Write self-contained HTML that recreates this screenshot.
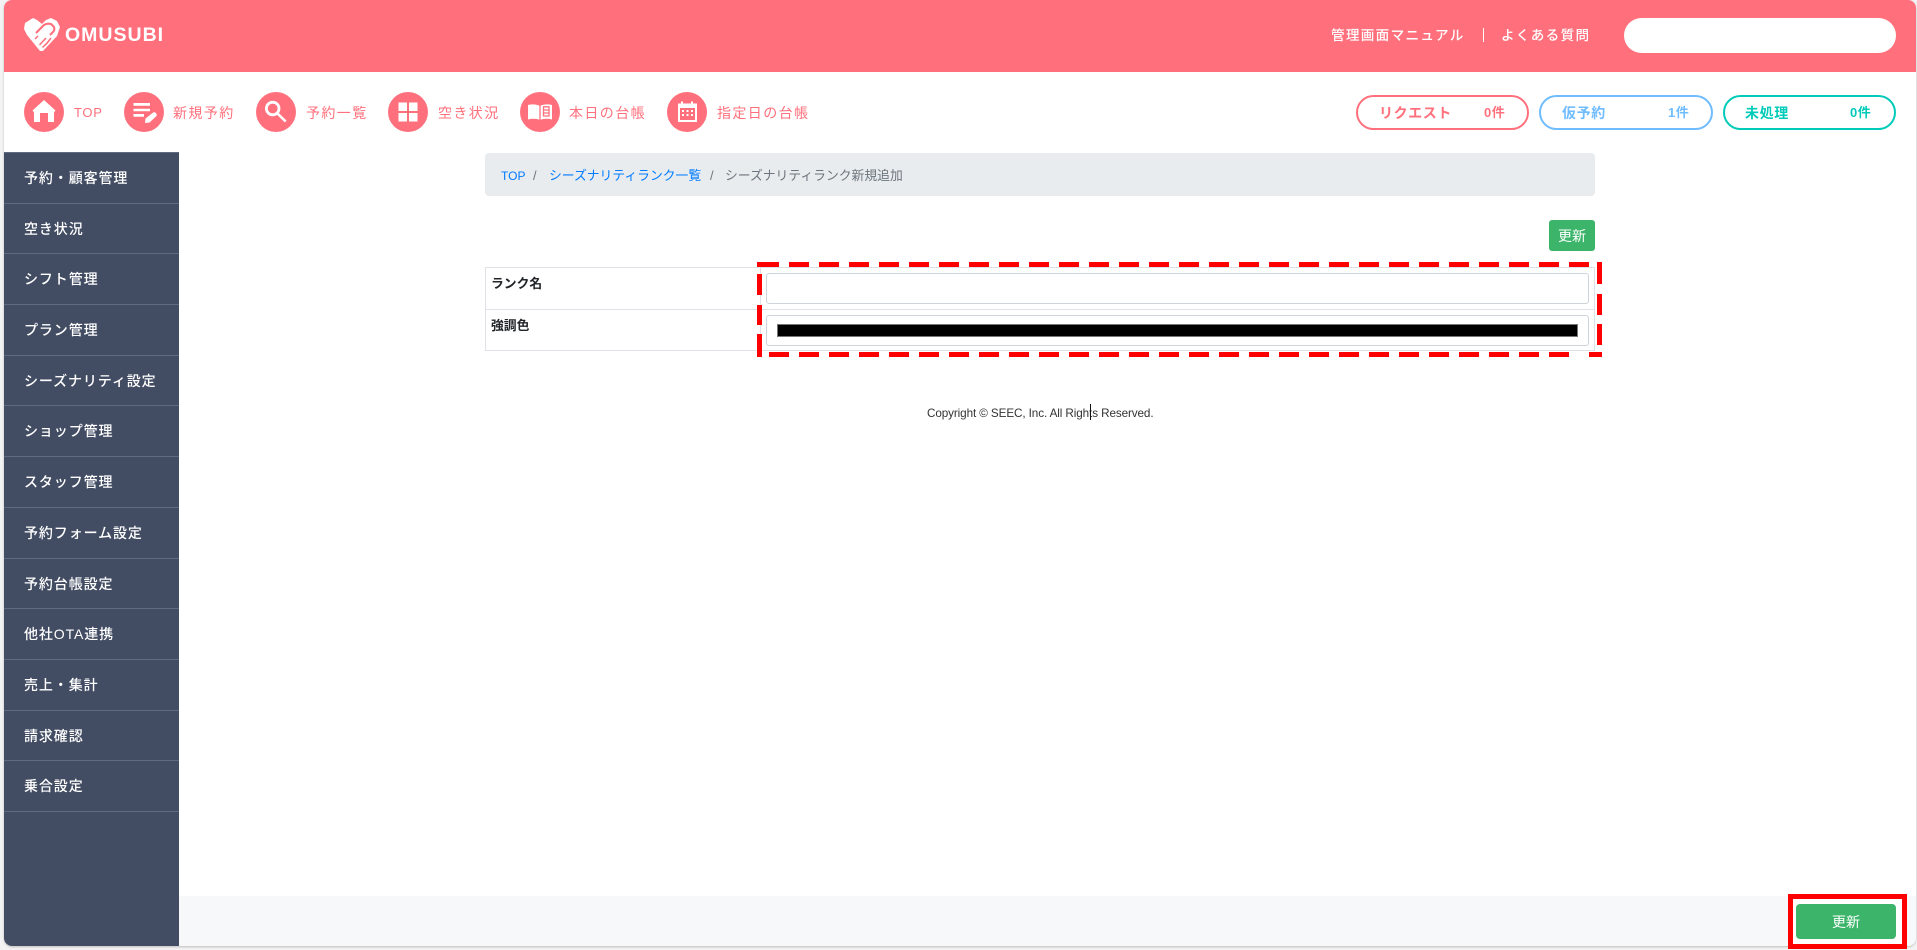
<!DOCTYPE html>
<html lang="ja"><head><meta charset="utf-8"><title>OMUSUBI</title>
<style>
*{box-sizing:border-box}
html,body{margin:0;padding:0;width:1917px;height:950px;overflow:hidden;background:#f3f3f3}
body{position:relative;font-family:"Liberation Sans","Noto Sans CJK JP",sans-serif;color:#212529}
#win{position:absolute;left:4px;top:0;width:1912px;height:946px;background:#fff;border-radius:8px;overflow:hidden;box-shadow:0 1px 2px rgba(0,0,0,.22)}
.a{position:absolute}
.t{position:absolute;white-space:nowrap;line-height:20px}
.hd{position:absolute;left:4px;top:0;width:1912px;height:72px;background:#ff707c;border-radius:8px 8px 0 0}
.ic{position:absolute;top:92px;width:40px;height:40px}
.nv{top:103px;font-size:14px;letter-spacing:1.4px;color:#ff707c}
.side{position:absolute;left:4px;top:152px;width:175px;height:794px;background:#424c63;border-top:1px solid #5f6980;border-radius:0 0 0 8px}
.side div{height:50.7px;border-bottom:1px solid #5f6980;color:#fff;font-size:14px;letter-spacing:.9px;line-height:51px;padding-left:20px;font-weight:500}
.pill{position:absolute;top:95px;height:35px;border:2px solid;border-radius:18px;background:#fff}
.pt{top:103px;font-size:14px;font-weight:700;letter-spacing:.6px}
.pn{top:103px;font-size:13px;font-weight:700;letter-spacing:.5px}
.bc{top:165.500px;font-size:12.8px}
</style></head><body>
<div id="win"></div>
<div class="hd"></div>

<svg class="a" style="left:24px;top:18px" width="36" height="33" viewBox="0 0 36 33"><path fill="#fff" d="M9 0 1 5 0 11 3 17 16 33H19L33 18 36 9 33 3 27 0 22 2 18 6 13 2Z"/><path fill="none" stroke="#ff707c" stroke-width="2.100" d="M12 15 20 7Q23 5 27 6L30 9Q31 12 29 14L26 17"/><path fill="none" stroke="#ff707c" stroke-width="1.500" d="M11 21 14 18M15.500 27 22 20M18.500 29.500 25 23M21.500 27 27 20"/></svg>
<div class="t" style="left:65px;top:25px;font-size:19.500px;font-weight:700;letter-spacing:1px;color:#fff">OMUSUBI</div>

<div class="t" style="left:1331px;top:26px;font-size:13.600px;letter-spacing:1.300px;color:#fff;font-weight:500">管理画面マニュアル</div>
<div class="a" style="left:1483px;top:28px;width:1px;height:14px;background:#fff"></div>
<div class="t" style="left:1501px;top:26px;font-size:13.600px;letter-spacing:1.300px;color:#fff;font-weight:500">よくある質問</div>
<div class="a" style="left:1624px;top:18px;width:272px;height:35px;background:#fff;border-radius:18px"></div>

<svg class="ic" style="left:24px" viewBox="0 0 40 40"><circle cx="20" cy="20" r="20" fill="#ff707c"/><path fill="#fff" d="M20 8 31.500 18.500 30 20.500V30H24V21H16V30H10V20.500L8.500 18.500Z"/></svg>
<div class="t nv" style="left:74px;font-size:13px;letter-spacing:.7px">TOP</div>
<svg class="ic" style="left:124px" viewBox="0 0 40 40"><circle cx="20" cy="20" r="20" fill="#ff707c"/><path fill="#fff" d="M9.500 11H26V13.700H9.500ZM9.500 16.700H26V19.300H9.500ZM9.500 22H20V24.700H9.500ZM21 31 21.500 26.500 28.500 21C29.800 20 31 20 32 21.200S33 23.500 32 24.500L25.500 30.500Z"/></svg>
<div class="t nv" style="left:173px">新規予約</div>
<svg class="ic" style="left:256px" viewBox="0 0 40 40"><circle cx="20" cy="20" r="20" fill="#ff707c"/><circle cx="16.700" cy="16.500" r="6.300" fill="none" stroke="#fff" stroke-width="2.800"/><path stroke="#fff" stroke-width="2.600" d="M21.500 21.500 29.700 29.500"/></svg>
<div class="t nv" style="left:306px">予約一覧</div>
<svg class="ic" style="left:388px" viewBox="0 0 40 40"><circle cx="20" cy="20" r="20" fill="#ff707c"/><path fill="#fff" d="M10.500 10.500H19V19H10.500ZM21 10.500H29.500V19H21ZM10.500 21H19V29.500H10.500ZM21 21H29.500V29.500H21Z"/></svg>
<div class="t nv" style="left:438px">空き状況</div>
<svg class="ic" style="left:520px" viewBox="0 0 40 40"><circle cx="20" cy="20" r="20" fill="#ff707c"/><path fill="#fff" d="M8 13C12 12 16 12 20 14V28C16 26.500 12 26.500 8 27.500ZM20 14C24 12 28 12 32 13V27.500C28 26.500 24 26.500 20 28Z"/><path stroke="#ff707c" stroke-width="1.300" fill="none" d="M20 14V28M23.500 14.800H29V24H23.500ZM23.500 18H29M23.500 21H29"/></svg>
<div class="t nv" style="left:569px">本日の台帳</div>
<svg class="ic" style="left:667px" viewBox="0 0 40 40"><circle cx="20" cy="20" r="20" fill="#ff707c"/><path fill="#fff" d="M11 11.500H14V9.500H16V11.500H24V9.500H26V11.500H30V30H11Z"/><rect x="13" y="16" width="15" height="12" fill="#ff707c"/><path fill="#fff" d="M15 18H17V20H15ZM19.500 18H21.500V20H19.500ZM24 18H26V20H24ZM15 22H17V24H15ZM19.500 22H21.500V24H19.500ZM24 22H26V24H24Z"/></svg>
<div class="t nv" style="left:717px">指定日の台帳</div>

<div class="pill" style="left:1356px;width:173px;border-color:#ff707c"></div>
<div class="t pt" style="left:1379px;color:#ff707c">リクエスト</div><div class="t pn" style="left:1484px;color:#ff707c">0件</div>
<div class="pill" style="left:1539px;width:174px;border-color:#6fbcff"></div>
<div class="t pt" style="left:1562px;color:#6fbcff">仮予約</div><div class="t pn" style="left:1668px;color:#6fbcff">1件</div>
<div class="pill" style="left:1723px;width:173px;border-color:#00cbb8"></div>
<div class="t pt" style="left:1745px;color:#00cbb8">未処理</div><div class="t pn" style="left:1850px;color:#00cbb8">0件</div>

<div class="side">
<div>予約・顧客管理</div><div>空き状況</div><div>シフト管理</div><div>プラン管理</div><div>シーズナリティ設定</div><div>ショップ管理</div><div>スタッフ管理</div><div>予約フォーム設定</div><div>予約台帳設定</div><div>他社OTA連携</div><div>売上・集計</div><div>請求確認</div><div>乗合設定</div>
</div>

<div class="a" style="left:485px;top:153px;width:1110px;height:43px;background:#e9ecef;border-radius:4px"></div>
<div class="t bc" style="left:501px;color:#007bff;font-size:12px">TOP</div>
<div class="t bc" style="left:533px;color:#6c757d">/</div>
<div class="t bc" style="left:549px;color:#007bff">シーズナリティランク一覧</div>
<div class="t bc" style="left:710px;color:#6c757d">/</div>
<div class="t bc" style="left:725px;color:#6c757d">シーズナリティランク新規追加</div>

<div class="a" style="left:1549px;top:220px;width:46px;height:31px;background:#3cb56a;border-radius:3px"></div>
<div class="t" style="left:1558px;top:226px;font-size:14px;color:#fff">更新</div>

<div class="a" style="left:485px;top:267px;width:1110px;height:84px;border:1px solid #dee2e6"></div>
<div class="a" style="left:485px;top:309px;width:1110px;height:1px;background:#dee2e6"></div>
<div class="a" style="left:760px;top:267px;width:1px;height:84px;background:#dee2e6"></div>
<div class="t" style="left:491px;top:274px;font-size:12.800px;font-weight:700">ランク名</div>
<div class="t" style="left:491px;top:316px;font-size:12.800px;font-weight:700">強調色</div>
<div class="a" style="left:766px;top:273px;width:823px;height:31px;border:1px solid #ced4da;border-radius:3px;background:#fff"></div>
<div class="a" style="left:766px;top:315px;width:823px;height:31px;border:1px solid #ced4da;border-radius:3px;background:#fff"></div>
<div class="a" style="left:777px;top:324px;width:801px;height:13px;background:#000;border:1px solid #767676"></div>

<svg class="a" style="left:757px;top:262px" width="845" height="95" viewBox="0 0 845 95" fill="#f00">
<path d="M0 0H22V5H0ZM32 0H52V5H32ZM62 0H82V5H62ZM92 0H112V5H92ZM0 12H5V33H0ZM0 43H5V63H0ZM0 72H5V95H0ZM12 90H32V95H12ZM42 90H62V95H42ZM72 90H92V95H72ZM102 90H122V95H102ZM840 0H845V22H840ZM840 32H845V53H840ZM840 62H845V83H840ZM832 90H845V95H832Z"/>
<path d="M122 0H142V5H122ZM152 0H172V5H152ZM182 0H202V5H182ZM212 0H232V5H212ZM242 0H262V5H242ZM272 0H292V5H272ZM302 0H322V5H302ZM332 0H352V5H332ZM362 0H382V5H362ZM392 0H412V5H392ZM422 0H442V5H422ZM452 0H472V5H452ZM482 0H502V5H482ZM512 0H532V5H512ZM542 0H562V5H542ZM572 0H592V5H572ZM602 0H622V5H602ZM632 0H652V5H632ZM662 0H682V5H662ZM692 0H712V5H692ZM722 0H742V5H722ZM752 0H772V5H752ZM782 0H802V5H782ZM812 0H832V5H812Z"/>
<path d="M132 90H152V95H132ZM162 90H182V95H162ZM192 90H212V95H192ZM222 90H242V95H222ZM252 90H272V95H252ZM282 90H302V95H282ZM312 90H332V95H312ZM342 90H362V95H342ZM372 90H392V95H372ZM402 90H422V95H402ZM432 90H452V95H432ZM462 90H482V95H462ZM492 90H512V95H492ZM522 90H542V95H522ZM552 90H572V95H552ZM582 90H602V95H582ZM612 90H632V95H612ZM642 90H662V95H642ZM672 90H692V95H672ZM702 90H722V95H702ZM732 90H752V95H732ZM762 90H782V95H762ZM792 90H812V95H792Z"/>
</svg>

<div class="t" style="left:927px;top:403.500px;font-size:11.700px;letter-spacing:-.1px;color:#333">Copyright © SEEC, Inc. All Rights Reserved.</div>
<div class="a" style="left:1090px;top:404px;width:1px;height:16px;background:#111"></div>

<div class="a" style="left:179px;top:896px;width:1737px;height:50px;background:#f7f8fa;border-radius:0 0 8px 0"></div>

<div class="a" style="left:1788px;top:894px;width:119px;height:55px;border:5.500px solid #f00;background:#fff"></div>
<div class="a" style="left:1796px;top:904px;width:100px;height:35px;background:#3cb56a;border-radius:4px"></div>
<div class="t" style="left:1832px;top:912px;font-size:14px;color:#fff">更新</div>
</body></html>
